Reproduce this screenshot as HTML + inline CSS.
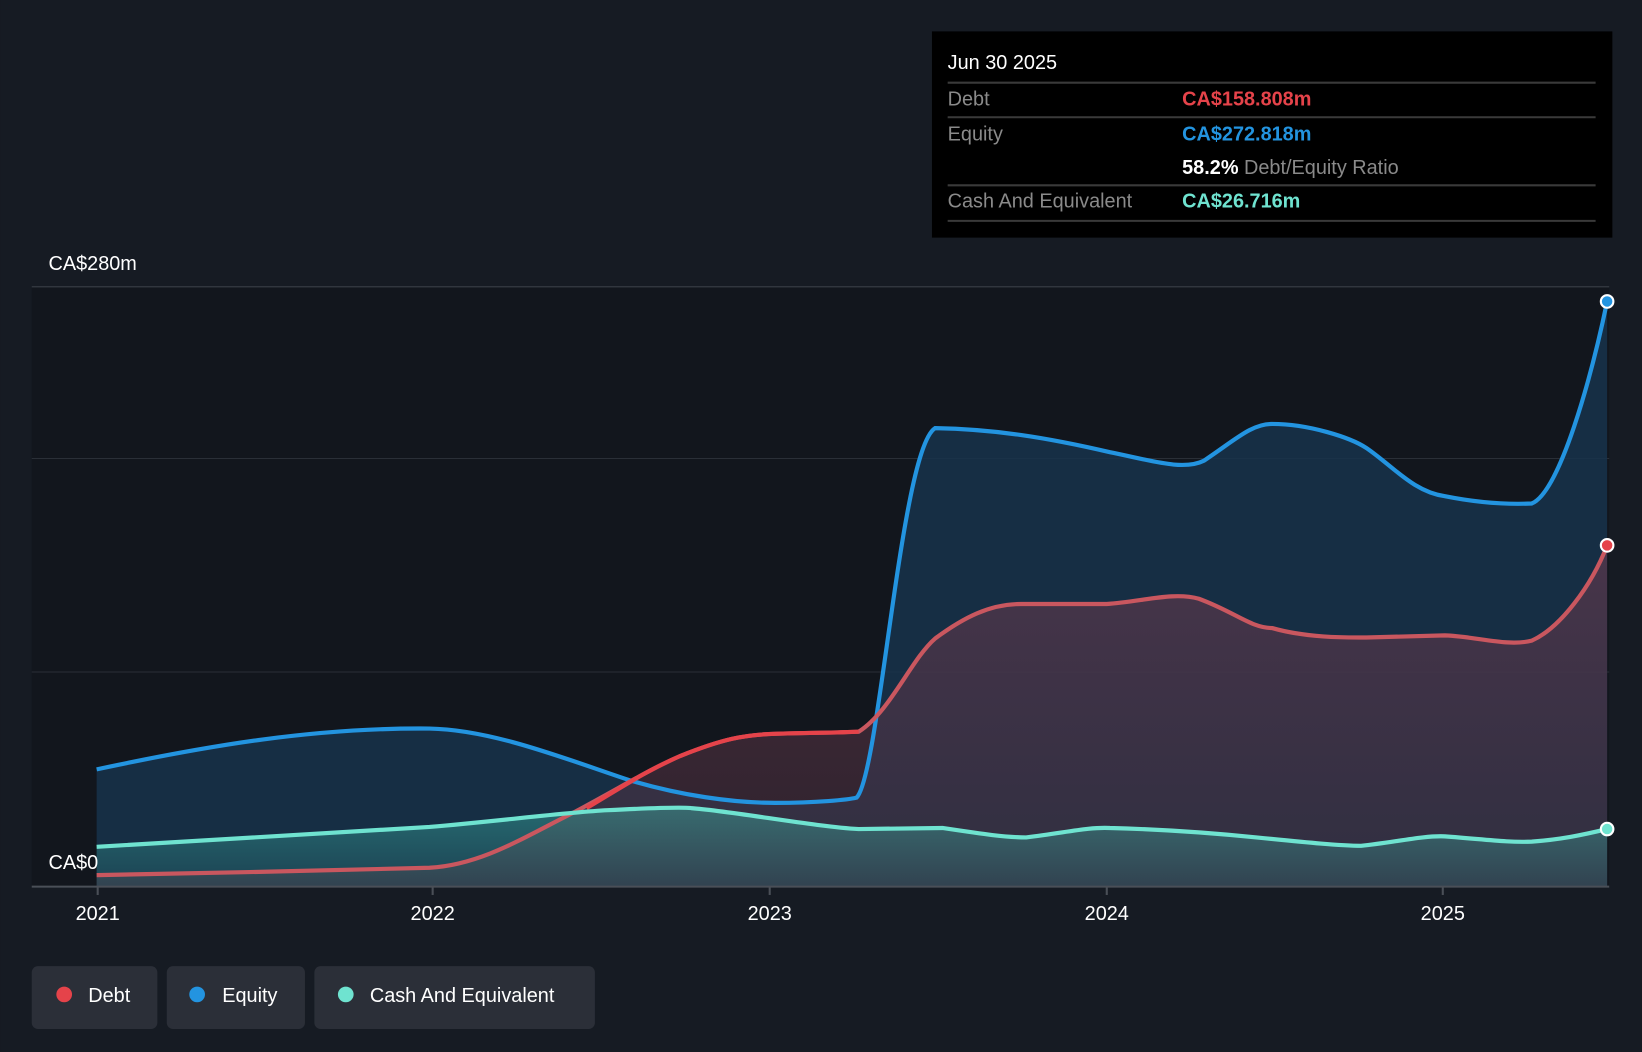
<!DOCTYPE html>
<html><head><meta charset="utf-8"><style>
html,body{margin:0;padding:0;background:#161b23;}
svg{display:block;font-family:"Liberation Sans",Roboto,sans-serif;}
</style></head><body>
<svg width="1642" height="1052" viewBox="0 0 1568 1005" xmlns="http://www.w3.org/2000/svg">
<defs>
<linearGradient id="cg" x1="0" y1="0" x2="0" y2="1"><stop offset="0" stop-color="#3bb3a6" stop-opacity="0.45"/><stop offset="1" stop-color="#3bb3a6" stop-opacity="0.15"/></linearGradient>
<linearGradient id="dg" x1="0" y1="0" x2="0" y2="1"><stop offset="0" stop-color="#6a3a4e" stop-opacity="0.6"/><stop offset="1" stop-color="#4a2f3e" stop-opacity="0.5"/></linearGradient>
</defs>
<rect width="1568" height="1005" fill="#161b23"/>
<rect x="30" y="274" width="1507" height="573" fill="#12161d"/>
<line x1="30" y1="274" x2="1537" y2="274" stroke="#3a3f47" stroke-width="1"/>
<line x1="30" y1="438" x2="1537" y2="438" stroke="#2a2f37" stroke-width="1"/>
<line x1="30" y1="642" x2="1537" y2="642" stroke="#2a2f37" stroke-width="1"/>
<!-- equity area -->
<path d="M92,735 C200,712 300,695 410,696 C470,697 540,725 600,745 C650,760 700,767 740,767 C780,767 810,764 818,762 C840,740 860,430 893,409 C950,410 1000,418 1060,432 C1100,440 1130,450 1150,440 C1180,420 1195,405 1215,405 C1250,405 1290,418 1305,428 C1330,445 1350,470 1380,474 C1410,480 1440,482 1463,481 C1490,470 1520,360 1535,288 L1535,847 L92,847 Z" fill="#17324b" fill-opacity="0.85"/>
<!-- debt area -->
<path d="M92,836 C200,834 300,832 410,829 C460,826 500,800 550,775 C600,748 620,735 650,722 C690,706 710,702 740,701 C770,700 800,700 820,699 C850,680 870,630 893,610 C920,590 945,577 975,577 L1057,577 C1090,575 1120,565 1145,572 C1180,585 1195,600 1215,600 C1250,610 1290,609 1305,609 L1380,607 C1410,608 1440,618 1463,612 C1490,600 1520,560 1535,521 L1535,847 L92,847 Z" fill="url(#dg)"/>
<!-- cash area -->
<path d="M92,809 L410,790 C480,784 540,776 580,774 C620,772 650,771 660,772 C700,775 780,790 820,792 L900,791 C940,797 960,800 980,800 C1020,795 1040,790 1060,791 C1100,792 1150,795 1200,800 C1250,805 1280,808 1300,808 C1330,805 1360,798 1380,799 C1420,802 1440,805 1463,804 C1490,802 1510,798 1535,792 L1535,847 L92,847 Z" fill="url(#cg)"/>
<path d="M92,735 C200,712 300,695 410,696 C470,697 540,725 600,745 C650,760 700,767 740,767 C780,767 810,764 818,762 C840,740 860,430 893,409 C950,410 1000,418 1060,432 C1100,440 1130,450 1150,440 C1180,420 1195,405 1215,405 C1250,405 1290,418 1305,428 C1330,445 1350,470 1380,474 C1410,480 1440,482 1463,481 C1490,470 1520,360 1535,288" fill="none" stroke="#2394e0" stroke-width="4"/>
<path d="M92,836 C200,834 300,832 410,829 C460,826 500,800 550,775 C600,748 620,735 650,722 C690,706 710,702 740,701 C770,700 800,700 820,699 C850,680 870,630 893,610 C920,590 945,577 975,577 L1057,577 C1090,575 1120,565 1145,572 C1180,585 1195,600 1215,600 C1250,610 1290,609 1305,609 L1380,607 C1410,608 1440,618 1463,612 C1490,600 1520,560 1535,521" fill="none" stroke="#c9575f" stroke-width="4"/>
<path d="M560,772 C600,748 620,735 650,722 C690,706 710,702 740,701 C770,700 800,700 820,699" fill="none" stroke="#e5434a" stroke-width="4"/>
<path d="M92,809 L410,790 C480,784 540,776 580,774 C620,772 650,771 660,772 C700,775 780,790 820,792 L900,791 C940,797 960,800 980,800 C1020,795 1040,790 1060,791 C1100,792 1150,795 1200,800 C1250,805 1280,808 1300,808 C1330,805 1360,798 1380,799 C1420,802 1440,805 1463,804 C1490,802 1510,798 1535,792" fill="none" stroke="#6fe3d0" stroke-width="4"/>
<circle cx="1535" cy="288" r="6" fill="#2394e0" stroke="#fff" stroke-width="2"/>
<circle cx="1535" cy="521" r="6" fill="#e5434a" stroke="#fff" stroke-width="2"/>
<circle cx="1535" cy="792" r="6" fill="#6fe3d0" stroke="#fff" stroke-width="2"/>
<line x1="30" y1="847" x2="1537" y2="847" stroke="#4a4f57" stroke-width="2"/>
<g stroke="#4a4f57" stroke-width="2">
<line x1="93" y1="847" x2="93" y2="855"/><line x1="413" y1="847" x2="413" y2="855"/><line x1="735" y1="847" x2="735" y2="855"/><line x1="1057" y1="847" x2="1057" y2="855"/><line x1="1378" y1="847" x2="1378" y2="855"/>
</g>
<g fill="#fff" font-size="19" text-anchor="middle">
<text x="93" y="879">2021</text><text x="413" y="879">2022</text><text x="735" y="879">2023</text><text x="1057" y="879">2024</text><text x="1378" y="879">2025</text>
</g>
<text x="46" y="258" fill="#fff" font-size="19">CA$280m</text>
<text x="46" y="830" fill="#fff" font-size="19">CA$0</text>
<!-- tooltip -->
<rect x="890" y="30" width="650" height="197" fill="#000"/>
<text x="905" y="66" fill="#fff" font-size="19">Jun 30 2025</text>
<g stroke="#3a3a3a" stroke-width="2">
<line x1="905" y1="79" x2="1524" y2="79"/><line x1="905" y1="112" x2="1524" y2="112"/><line x1="905" y1="177" x2="1524" y2="177"/><line x1="905" y1="211" x2="1524" y2="211"/>
</g>
<g font-size="19">
<text x="905" y="101" fill="#8a8a8a">Debt</text><text x="1129" y="101" fill="#e5434a" font-weight="bold">CA$158.808m</text>
<text x="905" y="134" fill="#8a8a8a">Equity</text><text x="1129" y="134" fill="#2394e0" font-weight="bold">CA$272.818m</text>
<text x="1129" y="166" fill="#fff" font-weight="bold">58.2%<tspan fill="#8a8a8a" font-weight="normal"> Debt/Equity Ratio</tspan></text>
<text x="905" y="198" fill="#8a8a8a">Cash And Equivalent</text><text x="1129" y="198" fill="#6fe3d0" font-weight="bold">CA$26.716m</text>
</g>
<!-- legend -->
<rect x="30" y="923" width="120" height="60" rx="6" fill="#2b2f38"/>
<rect x="159" y="923" width="132" height="60" rx="6" fill="#2b2f38"/>
<rect x="300" y="923" width="268" height="60" rx="6" fill="#2b2f38"/>
<circle cx="61" cy="950" r="7.5" fill="#e5434a"/>
<circle cx="188" cy="950" r="7.5" fill="#2394e0"/>
<circle cx="330" cy="950" r="7.5" fill="#6fe3d0"/>
<g fill="#fff" font-size="19">
<text x="84" y="957">Debt</text><text x="212" y="957">Equity</text><text x="353" y="957">Cash And Equivalent</text>
</g>
</svg>
</body></html>
